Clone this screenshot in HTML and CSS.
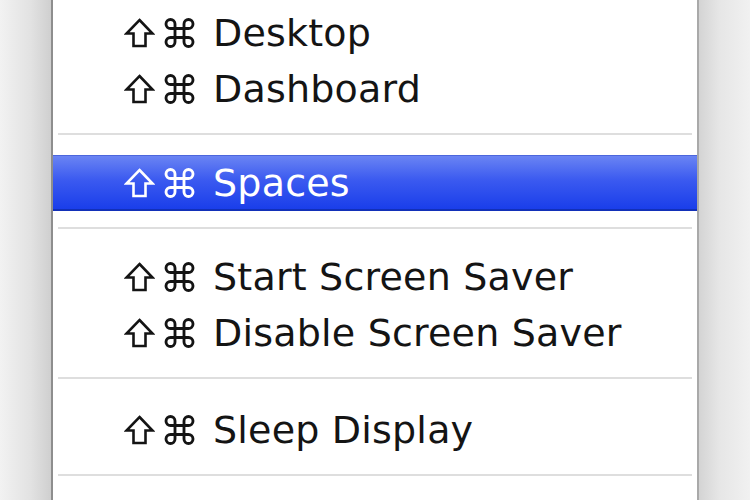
FILE: index.html
```html
<html><head><title>Menu</title>
<link rel="stylesheet" href="styles.css">
</head>
<body>
<svg width="0" height="0" class="defs">
  <symbol id="shift" viewBox="0 0 30 30">
    <path d="M15 2 L28 15.5 L21 15.5 L21 28 L9 28 L9 15.5 L2 15.5 Z" fill="none" stroke="currentColor" stroke-width="2.6" stroke-linejoin="miter"/>
  </symbol>
  <symbol id="cmd" viewBox="2 2 20 20">
    <path d="M15 6v12a3 3 0 1 0 3-3H6a3 3 0 1 0 3 3V6a3 3 0 1 0-3 3h12a3 3 0 1 0-3-3" fill="none" stroke="currentColor" stroke-width="1.9"/>
  </symbol>
</svg>
<div id="screen">
  <div class="side side-left"></div>
  <div id="menu">
    <div class="item"><svg class="key shift"><use href="#shift"/></svg><svg class="key cmd"><use href="#cmd"/></svg><span class="label">Desktop</span></div>
    <div class="item"><svg class="key shift"><use href="#shift"/></svg><svg class="key cmd"><use href="#cmd"/></svg><span class="label">Dashboard</span></div>
    <div class="sep"></div>
    <div class="item selected"><svg class="key shift"><use href="#shift"/></svg><svg class="key cmd"><use href="#cmd"/></svg><span class="label">Spaces</span></div>
    <div class="sep"></div>
    <div class="item"><svg class="key shift"><use href="#shift"/></svg><svg class="key cmd"><use href="#cmd"/></svg><span class="label">Start Screen Saver</span></div>
    <div class="item"><svg class="key shift"><use href="#shift"/></svg><svg class="key cmd"><use href="#cmd"/></svg><span class="label">Disable Screen Saver</span></div>
    <div class="sep sep-wide"></div>
    <div class="item"><svg class="key shift"><use href="#shift"/></svg><svg class="key cmd"><use href="#cmd"/></svg><span class="label">Sleep Display</span></div>
    <div class="sep"></div>
  </div>
  <div class="side side-right"></div>
</div>
</body>
</html>
```

FILE: styles.css
```css
body, html {
  margin: 0;
  padding: 0;
  height: 100%;
  width: 100%;
  overflow: hidden;
  font-family: 'DejaVu Sans', sans-serif;
  background-color: #ffffff;
  color: #141414;
}
.defs {
  position: absolute;
}
#screen {
  display: flex;
  height: 100vh;
}
.side {
  width: 51px;
  flex-shrink: 0;
}
.side-left {
  background: linear-gradient(to right, #f2f2f2, #e2e2e2 60%, #cfcfcf);
  border-right: 2px solid #8e8e8e;
}
.side-right {
  width: 51px;
  background: linear-gradient(to right, #d4d4d4, #e6e6e6 40%, #f1f1f1);
  border-left: 2px solid #a9a9a9;
}
#menu {
  flex: 1;
  background-color: #ffffff;
  padding-top: 5px;
}
.item {
  height: 56px;
  display: flex;
  align-items: center;
  padding-left: 71px;
  font-size: 38px;
  box-sizing: border-box;
}
.key {
  width: 31px;
  height: 30px;
  flex-shrink: 0;
}
.shift {
  margin-right: 9px;
}
.cmd {
  margin-right: 18px;
}
.label {
  letter-spacing: 0.2px;
}
.selected {
  background: linear-gradient(#6a84f3, #3b5af0 45%, #1a3eea);
  border-top: 1px solid #4c66dc;
  border-bottom: 2px solid #1230b8;
  color: #ffffff;
}
.sep {
  height: 38px;
  position: relative;
}
.sep-wide {
  height: 41px;
}
.sep::after {
  content: '';
  position: absolute;
  left: 5px;
  right: 5px;
  top: 16px;
  height: 2px;
  background-color: #dedede;
}
```
